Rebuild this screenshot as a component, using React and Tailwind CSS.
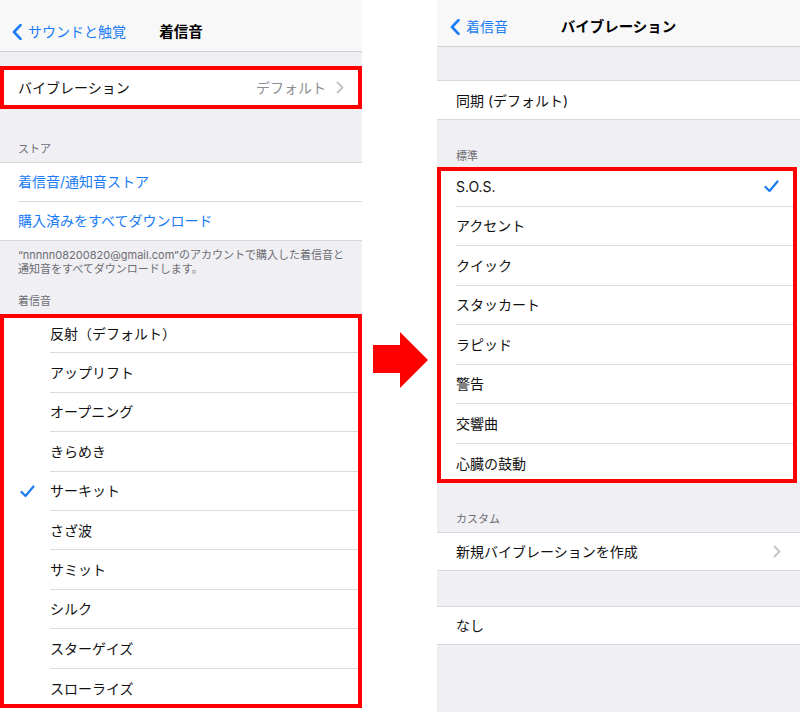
import React from "react";

const BLUE = "#1a7cf5";

const ringtones = [
  "反射（デフォルト）",
  "アップリフト",
  "オープニング",
  "きらめき",
  "サーキット",
  "さざ波",
  "サミット",
  "シルク",
  "スターゲイズ",
  "スローライズ",
];

const vibrations = [
  "S.O.S.",
  "アクセント",
  "クイック",
  "スタッカート",
  "ラピッド",
  "警告",
  "交響曲",
  "心臓の鼓動",
];

function BackChevron() {
  return (
    <svg width="10" height="16" viewBox="0 0 10 16" className="shrink-0">
      <path d="M8.5 1.2 L2 8 L8.5 14.8" fill="none" stroke={BLUE} strokeWidth="2.6" strokeLinecap="round" strokeLinejoin="round" />
    </svg>
  );
}

function Disclosure() {
  return (
    <svg width="8" height="13" viewBox="0 0 8 13" className="shrink-0">
      <path d="M1.5 1.5 L6.5 6.5 L1.5 11.5" fill="none" stroke="#c4c4c8" strokeWidth="1.8" strokeLinecap="round" strokeLinejoin="round" />
    </svg>
  );
}

function Check() {
  return (
    <svg width="15" height="13" viewBox="0 0 15 13">
      <path d="M1.5 7 L5.5 11 L13.5 1.5" fill="none" stroke={BLUE} strokeWidth="2.2" strokeLinecap="round" strokeLinejoin="round" />
    </svg>
  );
}

function NavBar({ back, title, tall }) {
  return (
    <div
      className={`grid grid-cols-[1fr_auto_1fr] items-center bg-[#f8f8f8] border-b border-[#cfcfd3] ${
        tall ? "h-[52px] pt-[12px] px-[12px]" : "h-[47px] pt-[7px] px-[13px]"
      }`}
    >
      <div className="flex items-center gap-[6px] text-[14px] text-[#1a7cf5]">
        <BackChevron />
        <span>{back}</span>
      </div>
      <div className="text-[14.5px] font-bold text-black">{title}</div>
      <div />
    </div>
  );
}

function SectionHeader({ children, className }) {
  return (
    <div className={`flex items-end px-[18px] text-[11px] leading-[14px] text-[#6d6d72] ${className}`}>
      {children}
    </div>
  );
}

function LeftPhone() {
  return (
    <div className="w-[362px] h-full flex flex-col bg-[#efeff4]">
      <NavBar back="サウンドと触覚" title="着信音" tall />

      <div className="h-[14px]" />
      <div className="h-[43px] bg-white flex items-center px-[18px] outline-4 -outline-offset-4 outline-[#ff0000]">
        <span className="flex-1 text-[14px] text-[#111]">バイブレーション</span>
        <span className="text-[14px] text-[#8e8e93] mr-[10px]">デフォルト</span>
        <Disclosure />
      </div>

      <SectionHeader className="h-[53px] pb-[6px]">ストア</SectionHeader>
      <div className="bg-white border-y border-[#d9d9dd]">
        <div className="h-[38.5px] pl-[18px]">
          <div className="h-full flex items-center border-b border-[#d9d9dd] text-[14px] text-[#1a7cf5]">
            着信音/通知音ストア
          </div>
        </div>
        <div className="h-[38.5px] pl-[18px] flex items-center text-[14px] text-[#1a7cf5]">
          購入済みをすべてダウンロード
        </div>
      </div>

      <div className="pt-[7px] px-[18px] text-[11px] leading-[14px] text-[#6d6d72] whitespace-nowrap">
        “nnnnn08200820@gmail.com”のアカウントで購入した着信音と
        <br />
        通知音をすべてダウンロードします。
      </div>
      <SectionHeader className="pt-[18px] pb-[6px]">着信音</SectionHeader>

      <div className="bg-white outline-4 -outline-offset-4 outline-[#ff0000]">
        {ringtones.map((name, i) => (
          <div key={name} className="h-[39.4px] flex">
            <div className="w-[50px] pl-[4px] flex items-center justify-center">
              {name === "サーキット" && <Check />}
            </div>
            <div
              className={`flex-1 flex items-center text-[14px] text-[#111] ${
                i < ringtones.length - 1 ? "border-b border-[#dcdcdf]" : ""
              }`}
            >
              {name}
            </div>
          </div>
        ))}
      </div>
      <div className="flex-1 bg-white" />
    </div>
  );
}

function RightPhone() {
  return (
    <div className="w-[363px] h-full flex flex-col bg-[#efeff4]">
      <NavBar back="着信音" title="バイブレーション" />

      <div className="h-[33px]" />
      <div className="h-[40px] bg-white border-y border-[#d9d9dd] flex items-center pl-[19px] text-[14px] text-[#111]">
        同期 (デフォルト)
      </div>

      <SectionHeader className="h-[47px] pb-[4px] pl-[19px]">標準</SectionHeader>
      <div className="bg-white">
        <div className="mr-[3px] outline-4 -outline-offset-4 outline-[#ff0000]">
          {vibrations.map((name, i) => (
            <div key={name} className="h-[39.5px] pl-[19px]">
              <div
                className={`h-full flex items-center pr-[18px] text-[14px] text-[#111] ${
                  i < vibrations.length - 1 ? "border-b border-[#dcdcdf]" : ""
                }`}
              >
                <span className="flex-1">{name}</span>
                {i === 0 && <Check />}
              </div>
            </div>
          ))}
        </div>
      </div>

      <SectionHeader className="h-[49px] pb-[6px] pl-[19px]">カスタム</SectionHeader>
      <div className="h-[39px] bg-white border-y border-[#d9d9dd] flex items-center pl-[19px] pr-[19px] text-[14px] text-[#111]">
        <span className="flex-1">新規バイブレーションを作成</span>
        <Disclosure />
      </div>

      <div className="h-[35px]" />
      <div className="h-[39px] bg-white border-y border-[#d9d9dd] flex items-center pl-[19px] text-[14px] text-[#111]">
        なし
      </div>
      <div className="flex-1" />
    </div>
  );
}

export default function App() {
  return (
    <div className="w-[800px] h-[712px] overflow-hidden bg-white flex font-[Inter,'Noto_Sans_CJK_JP',sans-serif]">
      <LeftPhone />

      {/* arrow between the two screens */}
      <div className="w-[75px] flex items-center justify-center pl-[2px]">
        <svg width="56" height="56" viewBox="0 0 56 56" className="mt-[8px]">
          <polygon points="0,13 27,13 27,0 55,28 27,56 27,41 0,41" fill="#ff0000" />
        </svg>
      </div>

      <RightPhone />
    </div>
  );
}
